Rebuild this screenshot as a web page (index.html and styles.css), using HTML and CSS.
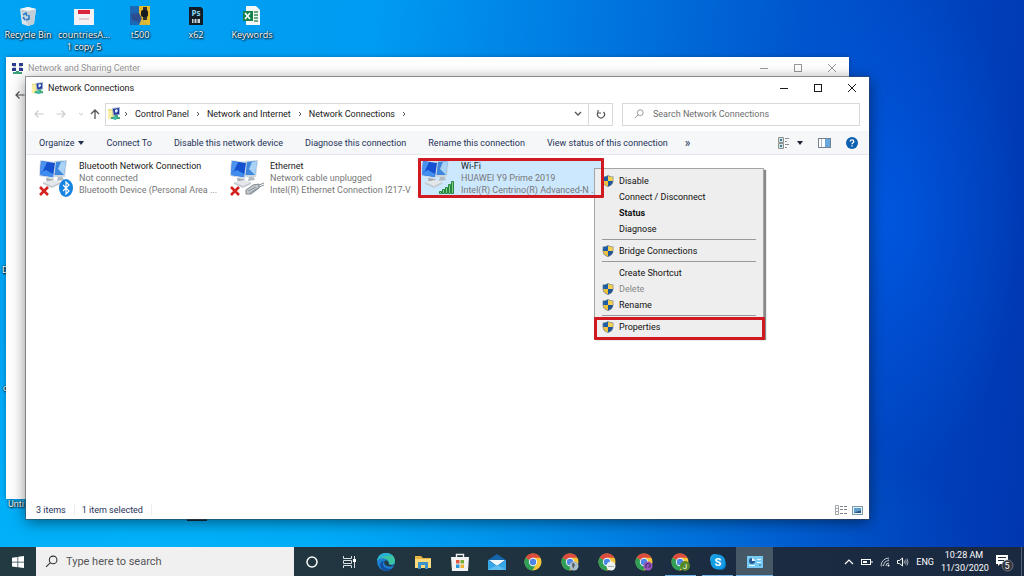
FILE: index.html
```html
<!DOCTYPE html>
<html lang="en">
<head>
  <meta charset="UTF-8">
  <title>Network Connections</title>
  <link rel="stylesheet" href="styles.css">
</head>
<body>

  <!-- shared icons -->
  <svg class="defs" width="0" height="0" aria-hidden="true">
    <symbol id="shield" viewBox="0 0 12 12">
      <path d="M6 0C4.500 1.200 2.500 1.600.6 1.600V6C.6 9 3 11 6 12 9 11 11.400 9 11.400 6V1.600C9.500 1.600 7.500 1.200 6 0Z" fill="#75838a"/>
      <path d="M6 .8V6H1.200V2.200C3 2.200 4.600 1.800 6 .8Z" fill="#1d5da8"/>
      <path d="M6 .8V6H10.800V2.200C9 2.200 7.400 1.800 6 .8Z" fill="#f6cf4c"/>
      <path d="M1.200 6H6V11.300C3.200 10.300 1.200 8.600 1.200 6Z" fill="#eec03e"/>
      <path d="M10.800 6H6V11.300C8.800 10.300 10.800 8.600 10.800 6Z" fill="#1b559c"/>
    </symbol>
    <symbol id="folder-net" viewBox="0 0 14 14">
      <path d="M1 2H5L6 1H8V11L1 12Z" fill="#eadf83"/>
      <path d="M1 4L5 3V11L1 12Z" fill="#f8f0a6"/>
      <path d="M5 1L13 0V8L6 9Z" fill="#a9b6d2"/>
      <path d="M6 2L12 1V7L7 8Z" fill="#213a9e"/>
      <path d="M8 3L10 2 11 4 9 6 8 5Z" fill="#e7effb"/>
      <path d="M8 8H11V10H13V12H4V10H8Z" fill="#39a46d"/>
      <circle cx="8" cy="11" r="2" fill="#40b8aa"/>
    </symbol>
    <symbol id="computers" viewBox="0 0 32 28">
      <path d="M20 16L24 16 26 20 19 21Z" fill="#b5bbc0"/>
      <path d="M8 18L15 19 17 22 9 23Z" fill="#a4abb1"/>
      <path d="M5 22L15 20 22 22 14 26Z" fill="#e4e7ea"/>
      <path d="M5 22L14 26 22 22V24L14 28 5 24Z" fill="#c4cacf"/>
      <path d="M16 1L29 0 27 17 16 17Z" fill="#ccd6df"/>
      <path d="M17 2L28 1 26 15 16 15Z" fill="#3f87dc"/>
      <path d="M23 2L28 1 26 15 20 9Z" fill="#a8d3f6"/>
      <path d="M2 0L18 2 16 19 1 16Z" fill="#d2dbe5"/>
      <path d="M3 1L17 3 15 17 2 15Z" fill="#1450cf"/>
      <path d="M3 1L9 2 5 11 2 13Z" fill="#4b92ee"/>
      <path d="M2 13L8 10 15 14 15 17 2 15Z" fill="#3f8def"/>
    </symbol>
    <symbol id="red-x" viewBox="0 0 10 10">
      <path d="M1 1L9 9M9 1L1 9" stroke="#d3221f" stroke-width="2.600"/>
    </symbol>
    <symbol id="min" viewBox="0 0 10 10"><path d="M1 5.500H9" stroke="currentColor"/></symbol>
    <symbol id="max" viewBox="0 0 10 10"><rect x="1.500" y="1.500" width="7" height="7" fill="none" stroke="currentColor"/></symbol>
    <symbol id="close" viewBox="0 0 10 10"><path d="M1 1L9 9M9 1L1 9" stroke="currentColor"/></symbol>
    <symbol id="left" viewBox="0 0 10 10"><path d="M9.500 5H1M4.500 1.500L1 5 4.500 8.500" fill="none" stroke="currentColor" stroke-width="1.200"/></symbol>
    <symbol id="chevron" viewBox="0 0 6 8"><path d="M2 2L4 4 2 6" fill="none" stroke="#555"/></symbol>
    <symbol id="magnifier" viewBox="0 0 12 12">
      <circle cx="7.500" cy="4.500" r="3.500" fill="none" stroke="currentColor"/>
      <path d="M5 7L1 11" stroke="currentColor"/>
    </symbol>
    <symbol id="chrome" viewBox="0 0 18 18">
      <circle cx="9" cy="9" r="8.500" fill="#f8c637"/>
      <path d="M9 9L1.600 4.700A8.500 8.500 0 0 1 16.400 4.800H9Z" fill="#dd4b3e"/>
      <path d="M9 9L1.600 4.700A8.500 8.500 0 0 0 8.500 17.500L12 11Z" fill="#2f9e57"/>
      <circle cx="9" cy="9" r="4.200" fill="#f4f6f8"/>
      <circle cx="9" cy="9" r="3.200" fill="#4c85e4"/>
    </symbol>
  </svg>

  <main class="desktop">
    <div class="shortcuts">
      <a class="shortcut" href="#">
        <svg width="20" height="20" viewBox="0 0 20 20">
          <path d="M2 3L10 1 18 3 16 18 10 20 4 18Z" fill="#dce4ea"/>
          <path d="M2 3L10 5 18 3 16 18 10 20Z" fill="#c3ced7"/>
          <path d="M2 3L10 1 18 3 10 5Z" fill="#f4f7f9"/>
          <path d="M5 9L8 7 9 10M11 9V13L8 14M7 14L5 11" fill="none" stroke="#1d78c8" stroke-width="1.500"/>
        </svg>
        <span>Recycle Bin</span>
      </a>
      <a class="shortcut" href="#">
        <svg width="20" height="20" viewBox="0 0 20 20">
          <rect y="3" width="20" height="16" fill="#f3f1f4"/>
          <rect x="4" y="4" width="12" height="4" fill="#d8243e"/>
          <path d="M5 13H15" stroke="#c9a9b2"/>
        </svg>
        <span>countriesA...<br>1 copy 5</span>
      </a>
      <a class="shortcut" href="#">
        <svg width="20" height="20" viewBox="0 0 20 20">
          <rect width="20" height="19" fill="#1c68b4"/>
          <path d="M9 0H20V19H17L12 13 9 9Z" fill="#e7bd2d"/>
          <path d="M1 8L9 7 12 13 9 16 2 14Z" fill="#2d4d91"/>
          <path d="M12 12L17 19H9Z" fill="#d9b634"/>
          <path d="M13 1H17V14H13Z" fill="#30302c"/>
          <rect x="11" y="4" width="7" height="7" rx="2" fill="#171b20"/>
        </svg>
        <span>t500</span>
      </a>
      <a class="shortcut" href="#">
        <svg width="20" height="20" viewBox="0 0 20 20">
          <path d="M3 1H15L17 3V19H3Z" fill="#101d27"/>
          <text x="10" y="10" text-anchor="middle" class="ps">Ps</text>
          <rect x="6" y="13" width="8" height="4" fill="#c7d1d6"/>
          <path d="M8 13V17M11 13V17" stroke="#101d27"/>
        </svg>
        <span>x62</span>
      </a>
      <a class="shortcut" href="#">
        <svg width="20" height="20" viewBox="0 0 20 20">
          <path d="M4 0H14L18 4V19H4Z" fill="#f4f7f5"/>
          <path d="M12 6H16M12 9H16M12 12H16M12 15H16" stroke="#35935a" stroke-width="1.500"/>
          <rect x="1" y="5" width="10" height="10" fill="#16804a"/>
          <path d="M3 7L8 13M8 7L3 13" stroke="#fff" stroke-width="1.600"/>
        </svg>
        <span>Keywords</span>
      </a>
    </div>
    <span class="stray stray-d">D</span>
    <span class="stray stray-c">c</span>
    <span class="stray stray-unti">Unti</span>
    <span class="stray-icon"></span>

    <section class="window sharing">
      <header class="titlebar">
        <svg width="13" height="13" viewBox="0 0 13 13">
          <path d="M1 1H5V4H1ZM8 1H12V4H8ZM1 6H5V9H1ZM8 6H12V9H8Z" fill="#2d3a90"/>
          <path d="M2 5H5M8 5H11" stroke="#8f9ab8"/>
          <path d="M5 9H8V10H11V12H2V10H5Z" fill="#3ba278"/>
        </svg>
        <h2>Network and Sharing Center</h2>
        <div class="controls">
          <button aria-label="Minimize"><svg width="10" height="10"><use href="#min"/></svg></button>
          <button aria-label="Maximize"><svg width="10" height="10"><use href="#max"/></svg></button>
          <button aria-label="Close"><svg width="10" height="10"><use href="#close"/></svg></button>
        </div>
      </header>
      <button class="back" aria-label="Back"><svg width="10" height="10"><use href="#left"/></svg></button>
    </section>

    <section class="window connections">
      <header class="titlebar">
        <svg width="13" height="13"><use href="#folder-net"/></svg>
        <h1>Network Connections</h1>
        <div class="controls">
          <button aria-label="Minimize"><svg width="10" height="10"><use href="#min"/></svg></button>
          <button aria-label="Maximize"><svg width="10" height="10"><use href="#max"/></svg></button>
          <button aria-label="Close"><svg width="10" height="10"><use href="#close"/></svg></button>
        </div>
      </header>

      <nav class="navrow">
        <div class="arrows">
          <button aria-label="Back"><svg width="10" height="10"><use href="#left"/></svg></button>
          <button aria-label="Forward"><svg class="flip" width="10" height="10"><use href="#left"/></svg></button>
          <button class="recent" aria-label="Recent locations"><svg width="6" height="6" viewBox="0 0 6 6"><path d="M1 2L3 4 5 2" fill="none" stroke="currentColor"/></svg></button>
          <button class="up" aria-label="Up"><svg width="10" height="10" viewBox="0 0 10 10"><path d="M5 10V1M1 5L5 1 9 5" fill="none" stroke="currentColor" stroke-width="1.300"/></svg></button>
        </div>
        <div class="address">
          <svg class="place" width="14" height="14"><use href="#folder-net"/></svg>
          <svg width="6" height="8"><use href="#chevron"/></svg>
          <a href="#">Control Panel</a>
          <svg width="6" height="8"><use href="#chevron"/></svg>
          <a href="#">Network and Internet</a>
          <svg width="6" height="8"><use href="#chevron"/></svg>
          <a href="#">Network Connections</a>
          <svg width="6" height="8"><use href="#chevron"/></svg>
          <button class="history" aria-label="Previous locations"><svg width="8" height="6" viewBox="0 0 8 6"><path d="M1 1L4 4 7 1" fill="none" stroke="#555" stroke-width="1.300"/></svg></button>
          <button class="refresh" aria-label="Refresh"><svg width="10" height="10" viewBox="0 0 10 10"><path d="M2.500 3A3.500 3.500 0 1 0 7.500 3M2 1V4H5" fill="none" stroke="#555" stroke-width="1.200"/></svg></button>
        </div>
        <label class="search">
          <svg width="10" height="10"><use href="#magnifier"/></svg>
          <input type="text" placeholder="Search Network Connections" aria-label="Search Network Connections">
        </label>
      </nav>

      <div class="commands">
        <button>Organize <svg width="6" height="4" viewBox="0 0 6 4"><path d="M0 0H6L3 4Z" fill="#223050"/></svg></button>
        <button>Connect To</button>
        <button>Disable this network device</button>
        <button>Diagnose this connection</button>
        <button>Rename this connection</button>
        <button>View status of this connection</button>
        <button class="more">»</button>
        <div class="view-tools">
          <button aria-label="Change your view">
            <svg width="12" height="12" viewBox="0 0 12 12">
              <path d="M.5.500H5.500V5.500H.5ZM.5 6.500H5.500V11.500H.5Z" fill="#dbe3dd" stroke="#8a9290"/>
              <path d="M2 3H4M2 9H4" stroke="#397ba0" stroke-width="2"/>
              <path d="M7 1.500H11M7 4.500H9M7 7.500H11M7 10.500H9" stroke="#8b9196"/>
            </svg>
            <svg width="6" height="4" viewBox="0 0 6 4"><path d="M0 0H6L3 4Z" fill="#223"/></svg>
          </button>
          <button aria-label="Preview pane">
            <svg width="13" height="10" viewBox="0 0 13 10">
              <rect x=".5" y=".5" width="12" height="9" fill="#fff" stroke="#76828f"/>
              <rect x="7" y="1" width="5" height="8" fill="#69a8df"/>
              <path d="M3.500 1V9" stroke="#b0bac4"/>
            </svg>
          </button>
          <button aria-label="Help">
            <svg width="12" height="12" viewBox="0 0 12 12">
              <circle cx="6" cy="6" r="6" fill="#0d5fb0"/>
              <path d="M4.200 4.500C4.200 2.300 7.800 2.300 7.800 4.500 7.800 5.800 6 5.800 6 7.300M6 8.300V9.600" fill="none" stroke="#fff" stroke-width="1.300"/>
            </svg>
          </button>
        </div>
      </div>

      <div class="adapters">
        <button class="adapter">
          <svg width="36" height="38" viewBox="0 0 36 38">
            <use href="#computers" width="32" height="28"/>
            <use href="#red-x" x="1" y="26" width="10" height="10"/>
            <ellipse cx="28" cy="28" rx="7" ry="9" fill="#1583df"/>
            <path d="M25 25L31 31 28 34V22L31 25 25 31" fill="none" stroke="#fff" stroke-width="1.200"/>
          </svg>
          <span class="info"><b>Bluetooth Network Connection</b><span>Not connected</span><span>Bluetooth Device (Personal Area ...</span></span>
        </button>
        <button class="adapter">
          <svg width="36" height="38" viewBox="0 0 36 38">
            <use href="#computers" width="32" height="28"/>
            <use href="#red-x" x="1" y="26" width="10" height="10"/>
            <path d="M17 30L24 25 30 24 30 28 22 34 17 34Z" fill="#c5cbd0" stroke="#7e868d"/>
            <path d="M19 31L27 27M21 33L29 28M30 25L35 23M30 27L35 25" stroke="#879198"/>
          </svg>
          <span class="info"><b>Ethernet</b><span>Network cable unplugged</span><span>Intel(R) Ethernet Connection I217-V</span></span>
        </button>
        <button class="adapter selected">
          <svg width="36" height="38" viewBox="0 0 36 38">
            <use href="#computers" width="32" height="28"/>
            <path d="M19.500 31.500H21.500V33.500H19.500ZM22.500 29.500H24.500V33.500H22.500ZM25.500 27.500H27.500V33.500H25.500ZM28.500 24.500H30.500V33.500H28.500ZM31.500 21.500H33.500V33.500H31.500Z" fill="#7bcf86" stroke="#27863d"/>
          </svg>
          <span class="info"><b>Wi-Fi</b><span>HUAWEI Y9 Prime 2019</span><span>Intel(R) Centrino(R) Advanced-N ...</span></span>
        </button>
      </div>

      <footer class="status">
        <span>3 items</span>
        <span>1 item selected</span>
        <div class="layouts">
          <button aria-label="Details">
            <svg width="12" height="10" viewBox="0 0 12 10"><path d="M.5.500H3.500V9.500H.5ZM.5 3.500H3.500M.5 6.500H3.500" fill="none" stroke="#a4a8ac"/><path d="M5 1.500H8M9 1.500H12M5 4.500H8M9 4.500H12M5 8.500H8M9 8.500H12" stroke="#7d8388"/></svg>
          </button>
          <button aria-label="Large icons">
            <svg width="11" height="9" viewBox="0 0 11 9"><rect x=".5" y=".5" width="10" height="8" fill="#e5f3fb" stroke="#7c9cb0"/><path d="M2 2H9V4L6 5 4 7H2Z" fill="#5b9fd0"/><path d="M2 7L6 5 9 4V7Z" fill="#2c5a80"/></svg>
          </button>
        </div>
      </footer>

      <div class="menu" role="menu">
        <button role="menuitem"><svg><use href="#shield"/></svg>Disable</button>
        <button role="menuitem">Connect / Disconnect</button>
        <button role="menuitem" class="default">Status</button>
        <button role="menuitem">Diagnose</button>
        <hr>
        <button role="menuitem"><svg><use href="#shield"/></svg>Bridge Connections</button>
        <hr>
        <button role="menuitem">Create Shortcut</button>
        <button role="menuitem" disabled><svg><use href="#shield"/></svg>Delete</button>
        <button role="menuitem"><svg><use href="#shield"/></svg>Rename</button>
        <hr>
        <button role="menuitem" class="marked"><svg><use href="#shield"/></svg>Properties</button>
      </div>
    </section>
  </main>

  <footer class="taskbar">
    <button class="start" aria-label="Start">
      <svg width="12" height="12" viewBox="0 0 12 12"><path d="M0 1.700L5.500.9V5.700H0ZM6.200.8L12 0V5.700H6.200ZM0 6.400H5.500V11.200L0 10.400ZM6.200 6.400H12V12L6.200 11.300Z" fill="#fff"/></svg>
    </button>
    <label class="task-search">
      <svg width="13" height="13"><use href="#magnifier"/></svg>
      <input type="text" placeholder="Type here to search" aria-label="Type here to search">
    </label>
    <div class="apps">
      <button aria-label="Cortana"><svg width="18" height="18" viewBox="0 0 18 18"><circle cx="9" cy="9" r="5" fill="none" stroke="#fff" stroke-width="1.500"/></svg></button>
      <button aria-label="Task View"><svg width="18" height="18" viewBox="0 0 18 18"><path d="M3.500 3V5.500H11.500V3M3.500 15V12.500H11.500V15M3.500 7.500H11.500V10.500H3.500ZM14.500 3V15" fill="none" stroke="#d9dfe2"/><rect x="13" y="6" width="3" height="3" fill="#fff"/></svg></button>
      <button aria-label="Edge">
        <svg width="20" height="20" viewBox="0 0 20 20">
          <circle cx="10" cy="10" r="9" fill="#1c7fd0"/>
          <path d="M1 9C2 3 6 1 10 1 16 1 19 5 19 9 19 12 16 13 13 12.500 13 9 12 7 8 6.500 5 6 2 7 1 9Z" fill="#3bc4a0"/>
          <path d="M1 9C2 3 6 1 10 1 13 1 15 2 16.500 4 12 3 5 4 1 9Z" fill="#29b1d8"/>
          <path d="M8 9C5 13 9 18 16 16.500 13 19.500 7 19.500 5 16 3 12 5 9 8 9Z" fill="#124f9e"/>
          <path d="M9 8.500C7 11 9 14.500 14 14.500 17 14.500 18 13.500 18.500 13 16 13.500 13 13 12.500 12 13.500 10 11 8 9 8.500Z" fill="#233a43"/>
        </svg>
      </button>
      <button aria-label="File Explorer"><svg width="18" height="18" viewBox="0 0 18 18"><path d="M1 3H7L9 5H17V15H1Z" fill="#eab643"/><path d="M1 6H17V15H1Z" fill="#f9da7c"/><path d="M4 9H14V16H11V12H7V16H4Z" fill="#3d91cb"/></svg></button>
      <button aria-label="Store"><svg width="20" height="20" viewBox="0 0 20 20"><path d="M6.500 6V2.500H13.500V6" fill="none" stroke="#eee" stroke-width="1.400"/><path d="M1 5H19L18 19H2Z" fill="#f2f2f2"/><path d="M6 8H9.500V11.500H6Z" fill="#e2583c"/><path d="M10.500 8H14V11.500H10.500Z" fill="#79ae35"/><path d="M6 12.500H9.500V16H6Z" fill="#2b96d5"/><path d="M10.500 12.500H14V16H10.500Z" fill="#eab32f"/></svg></button>
      <button aria-label="Mail"><svg width="18" height="18" viewBox="0 0 18 18"><path d="M0 7L9 1 18 7V17H0Z" fill="#1565aa"/><path d="M1 7H17L9 13Z" fill="#f1f8fc"/><path d="M0 7L9 13 18 7V17H0Z" fill="#37a7e8"/><path d="M0 17L9 12 18 17Z" fill="#5fbdf0"/></svg></button>
      <button aria-label="Chrome"><svg width="18" height="18"><use href="#chrome"/></svg></button>
      <button aria-label="Chrome, profile 1"><svg width="18" height="18" viewBox="0 0 18 18"><use href="#chrome"/><circle cx="13" cy="13" r="4.500" fill="#a9bec9"/><path d="M12 9L14 12 12 16 11 12Z" fill="#56616a"/></svg></button>
      <button aria-label="Chrome, profile 2"><svg width="18" height="18" viewBox="0 0 18 18"><use href="#chrome"/><circle cx="13" cy="13" r="4.500" fill="#f0f2f2"/><path d="M10 13.500H16" stroke="#a6b3b1"/></svg></button>
      <button aria-label="Chrome, profile 3"><svg width="18" height="18" viewBox="0 0 18 18"><use href="#chrome"/><circle cx="13" cy="13" r="4.500" fill="#9a57bd"/><path d="M11 15V12.500A2 2 0 0 1 15 12.500V14H13" fill="none" stroke="#4c2a73" stroke-width="1.200"/></svg></button>
      <button class="running" aria-label="Chrome, profile J"><svg width="20" height="18" viewBox="0 0 20 18"><use href="#chrome" width="18" height="18"/><circle cx="14" cy="13" r="5" fill="#568a28"/><text x="14" y="16" text-anchor="middle" class="profile">J</text></svg></button>
      <button class="running" aria-label="Skype"><svg width="18" height="18" viewBox="0 0 18 18"><circle cx="6" cy="6" r="5" fill="#2aa5e8"/><circle cx="12" cy="12" r="5" fill="#0879cc"/><circle cx="9" cy="9" r="7.500" fill="#139be3"/><text x="9" y="13" text-anchor="middle" class="skype">S</text></svg></button>
      <button class="running active" aria-label="Control Panel"><svg width="16" height="12" viewBox="0 0 16 12"><rect width="16" height="12" fill="#75c9f2"/><circle cx="5" cy="5" r="3" fill="#245b93"/><path d="M5 5V2A3 3 0 0 1 8 5Z" fill="#e7f8ff"/><path d="M10 3.500H14M10 6.500H14M2 9.500H8" stroke="#e8f8ff"/><path d="M12 9H14" stroke="#286b9e"/></svg></button>
    </div>
    <div class="tray">
      <button aria-label="Show hidden icons"><svg width="10" height="10" viewBox="0 0 10 10"><path d="M1 7L5 3 9 7" fill="none" stroke="#fff" stroke-width="1.200"/></svg></button>
      <svg width="12" height="10" viewBox="0 0 12 10"><rect x=".5" y="2.500" width="9" height="5" fill="none" stroke="#fff"/><rect x="2" y="4" width="4" height="2" fill="#fff"/><path d="M11 4V6" stroke="#fff"/></svg>
      <svg width="10" height="10" viewBox="0 0 10 10"><path d="M1 9A8 8 0 0 1 9 1M3.500 9A6 6 0 0 1 9 3.500M6 9A3 3 0 0 1 9 6" fill="none" stroke="#c3cad2"/><path d="M1 10L9 2" stroke="#7d8793" stroke-width=".7"/><circle cx="8.500" cy="8.500" r="1" fill="#fff"/></svg>
      <svg width="12" height="10" viewBox="0 0 12 10"><path d="M.5 3.500H2.500L5.500 1V9L2.500 6.500H.5Z" fill="none" stroke="#fff"/><path d="M7 3.500Q8 5 7 6.500M8.500 2.500Q10 5 8.500 7.500M10 1.500Q12 5 10 8.500" fill="none" stroke="#c5ccd5" stroke-width=".8"/></svg>
      <span class="lang">ENG</span>
      <time class="clock">10:28 AM<br>11/30/2020</time>
      <button class="notify" aria-label="Notifications">
        <svg width="20" height="20" viewBox="0 0 20 20"><path d="M2 3H14V12H6L4 14V12H2Z" fill="#fff"/><path d="M4 5.500H12M4 8.500H10" stroke="#1b2c44"/><circle cx="13.500" cy="13.500" r="5.500" fill="#33363c" stroke="#8d939a" stroke-width=".7"/><text x="13" y="17" text-anchor="middle" class="count">5</text></svg>
      </button>
      <button class="show-desktop" aria-label="Show desktop"></button>
    </div>
  </footer>

</body>
</html>
```

FILE: styles.css
```css
* {
  box-sizing: border-box;
}

body {
  margin: 0;
  min-height: 100vh;
  display: flex;
  flex-direction: column;
  font-family: Roboto, "Open Sans", sans-serif;
  font-size: 9px;
  line-height: 12px;
  color: #1a1a1a;
  overflow: hidden;
}

button {
  margin: 0;
  padding: 0;
  border: 0;
  background: none;
  color: inherit;
  font: inherit;
  white-space: nowrap;
}

a {
  color: inherit;
  text-decoration: none;
}

svg {
  display: block;
  flex: none;
}

input {
  flex: 1;
  min-width: 0;
  padding: 0;
  border: 0;
  outline: 0;
  background: none;
  font: inherit;
}

.defs {
  position: absolute;
}

.flip {
  transform: scaleX(-1);
}

/* desktop */
.desktop {
  position: relative;
  flex: 1;
  background:
    radial-gradient(ellipse 130px 260px at 87% 40%, rgba(0, 96, 240, 0.6), transparent),
    radial-gradient(ellipse 80% 40% at 15% 100%, rgba(0, 190, 255, 0.6), transparent),
    linear-gradient(96deg, #00a4f3 0%, #009bf2 35%, #0078e0 55%, #0054cd 75%, #0042bd 88%, #0037b0 100%);
}

.shortcuts {
  display: flex;
  padding-top: 6px;
}

.shortcut {
  width: 56px;
  display: flex;
  flex-direction: column;
  align-items: center;
  gap: 3px;
  color: #fff;
  font-family: "Open Sans", sans-serif;
  text-align: center;
  text-shadow: 1px 1px 2px #000, 0 0 2px #000;
}

.ps {
  font-size: 8px;
  font-weight: bold;
  fill: #8cd8ee;
  text-shadow: none;
}

.stray {
  position: absolute;
  color: #fff;
  text-shadow: 1px 1px 2px #000, 0 0 2px #000;
}

.stray-d {
  left: 2px;
  top: 264px;
}

.stray-c {
  left: 3px;
  top: 382px;
}

.stray-unti {
  left: 8px;
  top: 498px;
}

.stray-icon {
  position: absolute;
  left: 187px;
  bottom: 26px;
  width: 20px;
  height: 4px;
  background: #0c3044;
}

/* windows */
.window {
  position: absolute;
  display: flex;
  flex-direction: column;
  background: #fff;
}

.sharing {
  left: 6px;
  right: 175px;
  top: 57px;
  bottom: 48px;
  color: #999;
  box-shadow: 0 0 4px rgba(0, 0, 0, 0.3);
}

.connections {
  left: 26px;
  right: 155px;
  top: 77px;
  bottom: 28px;
  box-shadow: 0 0 0 1px rgba(60, 70, 80, 0.5), 0 3px 14px rgba(0, 0, 0, 0.5);
}

.titlebar {
  display: flex;
  align-items: center;
  gap: 4px;
  height: 22px;
  padding-left: 5px;
}

.titlebar h1,
.titlebar h2 {
  flex: 1;
  margin: 0;
  font-size: 9px;
  font-weight: normal;
}

.controls {
  display: flex;
}

.controls button {
  width: 34px;
  height: 20px;
  display: grid;
  place-items: center;
}

.back {
  align-self: flex-start;
  padding: 11px 9px;
  color: #555;
}

/* address row */
.navrow {
  display: flex;
  align-items: center;
  height: 32px;
  padding: 0 9px 2px 8px;
}

.arrows {
  display: flex;
  align-items: center;
  width: 71px;
  gap: 12px;
  color: #ccc;
}

.arrows button {
  width: 10px;
}

.arrows .recent {
  width: 6px;
}

.arrows .up {
  margin-left: -6px;
  color: #555;
}

.address {
  flex: 1 1 508px;
  display: flex;
  align-items: center;
  gap: 6px;
  height: 23px;
  padding-left: 1px;
  border: 1px solid #d9d9d9;
}

.address .place {
  margin-right: -4px;
}

.address .history {
  margin-left: auto;
}

.address .refresh {
  display: grid;
  place-items: center;
  width: 24px;
  height: 21px;
  border-left: 1px solid #d9d9d9;
}

.search {
  flex: 1 1 238px;
  display: flex;
  align-items: center;
  gap: 9px;
  height: 23px;
  margin-left: 9px;
  padding-left: 11px;
  border: 1px solid #d9d9d9;
  color: #888;
}

.search input::placeholder {
  color: #6d6d6d;
  opacity: 1;
}

/* command bar */
.commands {
  display: flex;
  align-items: center;
  gap: 22px;
  height: 24px;
  padding: 0 11px 0 13px;
  border-bottom: 1px solid #e4e8ec;
  background: #f5f7f9;
  color: #1e3257;
}

.commands button {
  display: flex;
  align-items: center;
  gap: 4px;
}

.commands .more {
  margin-left: -5px;
  font-size: 12px;
}

.view-tools {
  display: flex;
  align-items: center;
  gap: 15px;
  margin-left: auto;
}

.view-tools button {
  gap: 7px;
}

/* adapters */
.adapters {
  flex: 1;
  display: grid;
  grid-template-columns: repeat(auto-fill, 191px);
  align-content: start;
  padding: 3px 0 0 11px;
}

.adapter {
  position: relative;
  display: flex;
  gap: 5px;
  height: 40px;
  padding: 2px 1px;
  text-align: left;
}

.info {
  display: flex;
  flex-direction: column;
  color: #777;
}

.info b {
  font-weight: normal;
  color: #1a1a1a;
}

.adapter.selected {
  width: 185px;
  background: #cce8ff;
}

.adapter.selected::after {
  content: "";
  position: absolute;
  z-index: 3;
  inset: 0 0 0 -1px;
  border: 3px solid #d01920;
  border-radius: 1px;
}

/* status bar */
.status {
  display: flex;
  align-items: center;
  height: 18px;
  padding: 0 6px 0 10px;
  color: #1e3257;
}

.status span {
  padding-right: 8px;
  border-right: 1px solid #eee;
}

.status span + span {
  padding-left: 7px;
}

.layouts {
  display: flex;
  align-items: center;
  gap: 5px;
  margin-left: auto;
}

/* context menu */
.menu {
  position: absolute;
  z-index: 2;
  left: 568px;
  top: 91px;
  width: 170px;
  padding: 4px 0 2px;
  border: 1px solid #a5a5a5;
  background: #eee;
  box-shadow: 2px 2px 1px #888;
}

.menu button {
  position: relative;
  display: block;
  width: 100%;
  height: 16px;
  padding-left: 24px;
  text-align: left;
  color: #111;
}

.menu button:disabled {
  color: #888;
}

.menu .default {
  font-weight: bold;
}

.menu svg {
  position: absolute;
  left: 7px;
  top: 2px;
  width: 12px;
  height: 12px;
}

.menu hr {
  height: 1px;
  margin: 2px 7px 3px;
  border: 0;
  background: #999;
}

.menu .marked::after {
  content: "";
  position: absolute;
  inset: -2px -2px -5px -1px;
  border: 3px solid #d01920;
  border-radius: 1px;
}

/* taskbar */
.taskbar {
  display: flex;
  height: 29px;
  background: linear-gradient(90deg, #233a43, #20343f 45%, #1a2b42 75%, #1a2940);
  color: #fff;
}

.start {
  width: 36px;
  display: grid;
  place-items: center;
}

.task-search {
  flex: 0 1 258px;
  display: flex;
  align-items: center;
  gap: 8px;
  padding-left: 9px;
  background: #f0f0f0;
  color: #333;
}

.task-search input {
  font-size: 11px;
}

.task-search input::placeholder {
  color: #555;
  opacity: 1;
}

.apps {
  flex: 0 1 479px;
  display: flex;
}

.apps button {
  flex: 1;
  display: grid;
  place-items: center;
  position: relative;
}

.apps .running::after {
  content: "";
  position: absolute;
  left: 3px;
  right: 3px;
  bottom: 0;
  height: 1px;
  background: #76b9ed;
}

.apps .active {
  background: #465766;
}

.apps .active::after {
  left: 0;
  right: 0;
}

.profile {
  font-size: 8px;
  fill: #fff;
}

.skype {
  font-size: 11px;
  font-weight: bold;
  fill: #fff;
}

.tray {
  display: flex;
  align-items: center;
  gap: 7px;
  margin-left: auto;
}

.clock {
  width: 46px;
  line-height: 13px;
  text-align: center;
}

.count {
  font-size: 9px;
  fill: #fff;
}

.show-desktop {
  align-self: stretch;
  width: 3px;
  border-left: 1px solid #55606f;
}
```
